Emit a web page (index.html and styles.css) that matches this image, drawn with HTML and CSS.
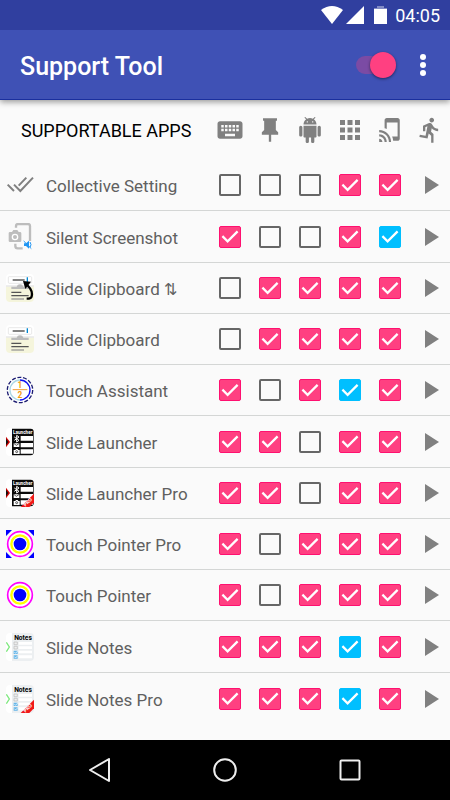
FILE: index.html
```html
<!DOCTYPE html>
<html lang="en">
<head>
  <meta charset="UTF-8">
  <meta name="viewport" content="width=device-width, initial-scale=1.0">
  <title>Support Tool</title>
  <link rel="stylesheet" href="styles.css">
</head>
<body>
  <!-- shared icons -->
  <svg class="defs" width="0" height="0" aria-hidden="true">
    <symbol id="play" viewBox="0 0 14 18"><path d="M0 0v18l14-9z"/></symbol>

    <symbol id="all" viewBox="0 0 84 84">
      <g fill="none" stroke="#808080" stroke-width="6">
        <path d="M5 41l19 19M24 41l19 19 38-40M38 44l23-24"/>
      </g>
    </symbol>

    <symbol id="silent" viewBox="0 0 84 84">
      <path d="M30 14V9q0-6 6-6h30q6 0 6 6v45" fill="none" stroke="#bdbdbd" stroke-width="7"/>
      <path d="M28 62v7q0 7 7 7h15" fill="none" stroke="#bdbdbd" stroke-width="7"/>
      <path d="M12 27h6l4-6h12l4 6h4q4 0 4 4v22q0 4-4 4H12q-4 0-4-4V31q0-4 4-4z" fill="#bdbdbd"/>
      <circle cx="27" cy="42" r="8" fill="none" stroke="#fff" stroke-width="4"/>
      <path d="M54 61h6l9-8v24l-9-8h-6z" fill="#2196f3"/>
      <path d="M53 54l23 23M72 57q6 8 0 16" fill="none" stroke="#2196f3" stroke-width="3"/>
    </symbol>

    <symbol id="clip" viewBox="0 0 84 84">
      <rect width="84" height="84" rx="12" fill="#fff"/>
      <path d="M0 38h84v34q0 12-12 12H12Q0 84 0 72z" fill="#f5f5dc"/>
      <rect x="7" y="8" width="70" height="20" rx="3" fill="#fff" stroke="#ddd" stroke-width="2"/>
      <path d="M20 18h36" stroke="#444" stroke-width="4"/>
      <path d="M64 10v14" stroke="#0288d1" stroke-width="4"/>
      <path d="M0 36h84" stroke="#ccc" stroke-width="2"/>
      <path d="M16 38v7h52v-7H52q-2-7-10-7t-10 7z" fill="#bbb"/>
      <path d="M16 55h30M16 65h52" stroke="#555" stroke-width="4"/>
      <path d="M16 75h38" stroke="#999" stroke-width="4"/>
    </symbol>

    <symbol id="clip-arrow" viewBox="0 0 84 84">
      <use href="#clip"/>
      <path d="M58 29q24 18 19 38-1 7-15 7" fill="none" stroke="#000" stroke-width="7"/>
      <path d="M51 21l24 2-17 22z"/>
    </symbol>

    <symbol id="assistant" viewBox="0 0 84 84">
      <circle cx="42" cy="42" r="38" fill="#fff" stroke="#1a1a70" stroke-width="4" stroke-dasharray="12 5"/>
      <path d="M42 12a30 30 0 0 0 0 60" fill="none" stroke="#add8e6" stroke-width="4"/>
      <path d="M42 12a30 30 0 0 1 0 60" fill="none" stroke="#1010f0" stroke-width="4"/>
      <path d="M20 41h44" stroke="#f39c35" stroke-width="3"/>
    </symbol>

    <symbol id="launcher" viewBox="0 0 84 84">
      <rect width="84" height="84" rx="12" fill="#fff"/>
      <path d="M0 26l12 16L0 58z" fill="#d00000"/>
      <path d="M0 32l7 10-7 10z" fill="#111"/>
      <path d="M18 2h56q9 0 9 9v62q0 9-9 9H18z" fill="#0a0a0a"/>
      <path d="M44 24h37v14H44zM44 45h37v13H44zM44 64h37v13H44z" fill="#fff"/>
      <path d="M25 27l14 10-7 5V22l7 5-14 10" fill="none" stroke="#fff" stroke-width="3"/>
      <path d="M23 46h17v11H23zM23 66h5l2-3h5l2 3h4v12H23z" fill="#fff"/>
      <path d="M23 46l8 6 9-6" fill="none" stroke="#111" stroke-width="2"/>
      <circle cx="32" cy="71" r="3" fill="none" stroke="#111" stroke-width="2"/>
    </symbol>

    <symbol id="notes" viewBox="0 0 84 84">
      <rect width="84" height="84" rx="12" fill="#fff"/>
      <path d="M18 0h54q12 0 12 12v60q0 12-12 12H18z" fill="#eceff1"/>
      <path d="M1 28l9 14-9 14" fill="none" stroke="#7de87d" stroke-width="4"/>
      <path d="M38 27h40v8H38zM38 40h40v8H38zM38 53h40v8H38zM38 67h40v9H38z" fill="#fff"/>
      <path d="M24 27h10v8H24zM24 40h10v8H24z" fill="#eee" stroke="#bbb" stroke-width="2"/>
      <path d="M23 53h12v10H23zM23 67h12v10H23z" fill="#64b5e8"/>
      <path d="M25 57l4 4 6-7M25 71l4 4 6-7" fill="none" stroke="#fff" stroke-width="2"/>
    </symbol>

    <symbol id="pro" viewBox="0 0 84 84">
      <path d="M84 44v26L70 84H44z" fill="#f01818"/>
    </symbol>

    <symbol id="pointer" viewBox="0 0 84 84">
      <circle cx="42" cy="42" r="37" fill="#fff" stroke="#f0f" stroke-width="5"/>
      <circle cx="42" cy="42" r="26" fill="#fff" stroke="#ff0" stroke-width="7"/>
      <circle cx="42" cy="42" r="19" fill="#00f"/>
    </symbol>
  </svg>

  <header>
    <div class="status">
      <svg width="22" height="18" viewBox="0 0 22 18" fill="#fff"><path d="M11 18L0 4q11-8 22 0z"/></svg>
      <svg width="18" height="18" viewBox="0 0 18 18" fill="#fff"><path d="M18 0v18H0z"/></svg>
      <svg class="battery" width="13" height="18" viewBox="0 0 13 18" fill="#fff"><path d="M3 0h7v2h3v2H0V2h3z" opacity=".4"/><path d="M0 3h13v15H0z"/></svg>
      <span class="clock">04:05</span>
    </div>
    <div class="appbar">
      <h1>Support Tool</h1>
      <input type="checkbox" class="switch" aria-label="Enable Support Tool" checked>
      <button type="button" class="more" aria-label="More options">
        <svg width="6" height="22" viewBox="0 0 6 22" fill="#fff"><circle cx="3" cy="3" r="3"/><circle cx="3" cy="11" r="3"/><circle cx="3" cy="19" r="3"/></svg>
      </button>
    </div>
  </header>

  <main>
    <table>
      <thead>
        <tr>
          <th class="title" scope="col">SUPPORTABLE APPS</th>
          <th scope="col" aria-label="Keyboard"><svg width="30" height="30" viewBox="0 0 24 24"><path d="M20 5H4c-1.100 0-1.990.9-1.990 2L2 17c0 1.100.9 2 2 2h16c1.100 0 2-.9 2-2V7c0-1.100-.9-2-2-2zm-9 3h2v2h-2V8zm0 3h2v2h-2v-2zM8 8h2v2H8V8zm0 3h2v2H8v-2zm-1 2H5v-2h2v2zm0-3H5V8h2v2zm9 7H8v-2h8v2zm0-4h-2v-2h2v2zm0-3h-2V8h2v2zm3 3h-2v-2h2v2zm0-3h-2V8h2v2z"/></svg></th>
          <th scope="col" aria-label="Pin"><svg width="28" height="28" viewBox="0 0 24 24"><path d="M6 2h12v2h-1v8l2 2v2h-6v6h-2v-6H5v-2l2-2V4H6z"/></svg></th>
          <th scope="col" aria-label="Android"><svg width="26" height="26" viewBox="0 0 24 24"><path d="M6 18c0 .55.45 1 1 1h1v3.500c0 .83.67 1.500 1.500 1.500s1.500-.67 1.500-1.500V19h2v3.500c0 .83.67 1.500 1.500 1.500s1.500-.67 1.500-1.500V19h1c.55 0 1-.45 1-1V8H6v10zM3.500 8C2.670 8 2 8.670 2 9.500v7c0 .83.67 1.500 1.500 1.500S5 17.330 5 16.500v-7C5 8.670 4.330 8 3.500 8zm17 0c-.83 0-1.500.67-1.500 1.500v7c0 .83.67 1.500 1.500 1.500s1.500-.67 1.500-1.500v-7c0-.83-.67-1.500-1.500-1.500zm-4.970-5.840l1.300-1.300c.2-.2.2-.51 0-.71-.2-.2-.51-.2-.71 0l-1.480 1.480C13.850 1.230 12.950 1 12 1c-.96 0-1.860.23-2.660.63L7.850.15c-.2-.2-.51-.2-.71 0-.2.2-.2.51 0 .71l1.310 1.310C6.970 3.260 6 5.010 6 7h12c0-1.990-.97-3.750-2.470-4.840zM10 5H9V4h1v1zm5 0h-1V4h1v1z"/></svg></th>
          <th scope="col" aria-label="Apps"><svg width="30" height="30" viewBox="0 0 24 24"><path d="M4 8h4V4H4v4zm6 12h4v-4h-4v4zm-6 0h4v-4H4v4zm0-6h4v-4H4v4zm6 0h4v-4h-4v4zm6-10v4h4V4h-4zm-6 4h4V4h-4v4zm6 6h4v-4h-4v4zm0 6h4v-4h-4v4z"/></svg></th>
          <th scope="col" aria-label="Tap and play"><svg width="26" height="26" viewBox="0 0 24 24"><path d="M2 16v2c2.760 0 5 2.240 5 5h2c0-3.870-3.130-7-7-7zm0 4v3h3c0-1.660-1.340-3-3-3zm0-8v2c4.970 0 9 4.030 9 9h2c0-6.080-4.920-11-11-11zM19 1.010L9 1c-1.100 0-2 .9-2 2v7.370c.69.160 1.360.37 2 .64V5h10v13h-5.030c.52 1.250.84 2.590.95 4H19c1.100 0 2-.9 2-2V3c0-1.100-.9-1.990-2-1.990z"/></svg></th>
          <th scope="col" aria-label="Run"><svg width="28" height="28" viewBox="0 0 24 24"><path d="M13.490 5.480c1.100 0 2-.9 2-2s-.9-2-2-2-2 .9-2 2 .9 2 2 2zm-3.600 13.900l1-4.400 2.100 2v6h2v-7.500l-2.100-2 .6-3c1.300 1.500 3.300 2.500 5.500 2.500v-2c-1.900 0-3.500-1-4.300-2.400l-1-1.600c-.4-.6-1-1-1.700-1-.3 0-.5.1-.8.1l-5.200 2.200v4.700h2v-3.400l1.800-.7-1.600 8.100-4.900-1-.4 2 7 1.400z"/></svg></th>
        </tr>
      </thead>
      <tbody>
        <tr>
          <th scope="row"><svg class="icon"><use href="#all"/></svg>Collective Setting</th>
          <td><input type="checkbox" aria-label="Collective Setting, keyboard"></td>
          <td><input type="checkbox" aria-label="Collective Setting, pin"></td>
          <td><input type="checkbox" aria-label="Collective Setting, android"></td>
          <td><input type="checkbox" aria-label="Collective Setting, apps" checked></td>
          <td><input type="checkbox" aria-label="Collective Setting, tap" checked></td>
          <td><button type="button" class="run" aria-label="Run Collective Setting"><svg><use href="#play"/></svg></button></td>
        </tr>
        <tr>
          <th scope="row"><svg class="icon"><use href="#silent"/></svg>Silent Screenshot</th>
          <td><input type="checkbox" aria-label="Silent Screenshot, keyboard" checked></td>
          <td><input type="checkbox" aria-label="Silent Screenshot, pin"></td>
          <td><input type="checkbox" aria-label="Silent Screenshot, android"></td>
          <td><input type="checkbox" aria-label="Silent Screenshot, apps" checked></td>
          <td><input type="checkbox" class="blue" aria-label="Silent Screenshot, tap" checked></td>
          <td><button type="button" class="run" aria-label="Run Silent Screenshot"><svg><use href="#play"/></svg></button></td>
        </tr>
        <tr>
          <th scope="row"><svg class="icon"><use href="#clip-arrow"/></svg>Slide Clipboard <span class="arrows">⇅</span></th>
          <td><input type="checkbox" aria-label="Slide Clipboard sync, keyboard"></td>
          <td><input type="checkbox" aria-label="Slide Clipboard sync, pin" checked></td>
          <td><input type="checkbox" aria-label="Slide Clipboard sync, android" checked></td>
          <td><input type="checkbox" aria-label="Slide Clipboard sync, apps" checked></td>
          <td><input type="checkbox" aria-label="Slide Clipboard sync, tap" checked></td>
          <td><button type="button" class="run" aria-label="Run Slide Clipboard sync"><svg><use href="#play"/></svg></button></td>
        </tr>
        <tr>
          <th scope="row"><svg class="icon"><use href="#clip"/></svg>Slide Clipboard</th>
          <td><input type="checkbox" aria-label="Slide Clipboard, keyboard"></td>
          <td><input type="checkbox" aria-label="Slide Clipboard, pin" checked></td>
          <td><input type="checkbox" aria-label="Slide Clipboard, android" checked></td>
          <td><input type="checkbox" aria-label="Slide Clipboard, apps" checked></td>
          <td><input type="checkbox" aria-label="Slide Clipboard, tap" checked></td>
          <td><button type="button" class="run" aria-label="Run Slide Clipboard"><svg><use href="#play"/></svg></button></td>
        </tr>
        <tr>
          <th scope="row"><svg class="icon" viewBox="0 0 84 84"><use href="#assistant"/><text class="digit" x="42" y="36">1</text><text class="digit" x="42" y="66">2</text></svg>Touch Assistant</th>
          <td><input type="checkbox" aria-label="Touch Assistant, keyboard" checked></td>
          <td><input type="checkbox" aria-label="Touch Assistant, pin"></td>
          <td><input type="checkbox" aria-label="Touch Assistant, android" checked></td>
          <td><input type="checkbox" class="blue" aria-label="Touch Assistant, apps" checked></td>
          <td><input type="checkbox" aria-label="Touch Assistant, tap" checked></td>
          <td><button type="button" class="run" aria-label="Run Touch Assistant"><svg><use href="#play"/></svg></button></td>
        </tr>
        <tr>
          <th scope="row"><svg class="icon" viewBox="0 0 84 84"><use href="#launcher"/><text class="cap-light" x="50" y="17">Launcher</text></svg>Slide Launcher</th>
          <td><input type="checkbox" aria-label="Slide Launcher, keyboard" checked></td>
          <td><input type="checkbox" aria-label="Slide Launcher, pin" checked></td>
          <td><input type="checkbox" aria-label="Slide Launcher, android"></td>
          <td><input type="checkbox" aria-label="Slide Launcher, apps" checked></td>
          <td><input type="checkbox" aria-label="Slide Launcher, tap" checked></td>
          <td><button type="button" class="run" aria-label="Run Slide Launcher"><svg><use href="#play"/></svg></button></td>
        </tr>
        <tr>
          <th scope="row"><svg class="icon" viewBox="0 0 84 84"><use href="#launcher"/><use href="#pro"/><text class="cap-light" x="50" y="17">Launcher</text><text class="ribbon" x="69" y="73" transform="rotate(-45 69 73)">PRO</text></svg>Slide Launcher Pro</th>
          <td><input type="checkbox" aria-label="Slide Launcher Pro, keyboard" checked></td>
          <td><input type="checkbox" aria-label="Slide Launcher Pro, pin" checked></td>
          <td><input type="checkbox" aria-label="Slide Launcher Pro, android"></td>
          <td><input type="checkbox" aria-label="Slide Launcher Pro, apps" checked></td>
          <td><input type="checkbox" aria-label="Slide Launcher Pro, tap" checked></td>
          <td><button type="button" class="run" aria-label="Run Slide Launcher Pro"><svg><use href="#play"/></svg></button></td>
        </tr>
        <tr>
          <th scope="row"><svg class="icon" viewBox="0 0 84 84"><path d="M0 0h18L0 18zM84 0v18L66 0zM0 84V66l18 18zM84 84H66l18-18z" fill="#00f"/><use href="#pointer"/></svg>Touch Pointer Pro</th>
          <td><input type="checkbox" aria-label="Touch Pointer Pro, keyboard" checked></td>
          <td><input type="checkbox" aria-label="Touch Pointer Pro, pin"></td>
          <td><input type="checkbox" aria-label="Touch Pointer Pro, android" checked></td>
          <td><input type="checkbox" aria-label="Touch Pointer Pro, apps" checked></td>
          <td><input type="checkbox" aria-label="Touch Pointer Pro, tap" checked></td>
          <td><button type="button" class="run" aria-label="Run Touch Pointer Pro"><svg><use href="#play"/></svg></button></td>
        </tr>
        <tr>
          <th scope="row"><svg class="icon"><use href="#pointer"/></svg>Touch Pointer</th>
          <td><input type="checkbox" aria-label="Touch Pointer, keyboard" checked></td>
          <td><input type="checkbox" aria-label="Touch Pointer, pin"></td>
          <td><input type="checkbox" aria-label="Touch Pointer, android" checked></td>
          <td><input type="checkbox" aria-label="Touch Pointer, apps" checked></td>
          <td><input type="checkbox" aria-label="Touch Pointer, tap" checked></td>
          <td><button type="button" class="run" aria-label="Run Touch Pointer"><svg><use href="#play"/></svg></button></td>
        </tr>
        <tr>
          <th scope="row"><svg class="icon" viewBox="0 0 84 84"><use href="#notes"/><text class="cap" x="51" y="20">Notes</text></svg>Slide Notes</th>
          <td><input type="checkbox" aria-label="Slide Notes, keyboard" checked></td>
          <td><input type="checkbox" aria-label="Slide Notes, pin" checked></td>
          <td><input type="checkbox" aria-label="Slide Notes, android" checked></td>
          <td><input type="checkbox" class="blue" aria-label="Slide Notes, apps" checked></td>
          <td><input type="checkbox" aria-label="Slide Notes, tap" checked></td>
          <td><button type="button" class="run" aria-label="Run Slide Notes"><svg><use href="#play"/></svg></button></td>
        </tr>
        <tr>
          <th scope="row"><svg class="icon" viewBox="0 0 84 84"><use href="#notes"/><use href="#pro"/><text class="cap" x="51" y="20">Notes</text><text class="ribbon" x="69" y="73" transform="rotate(-45 69 73)">PRO</text></svg>Slide Notes Pro</th>
          <td><input type="checkbox" aria-label="Slide Notes Pro, keyboard" checked></td>
          <td><input type="checkbox" aria-label="Slide Notes Pro, pin" checked></td>
          <td><input type="checkbox" aria-label="Slide Notes Pro, android" checked></td>
          <td><input type="checkbox" class="blue" aria-label="Slide Notes Pro, apps" checked></td>
          <td><input type="checkbox" aria-label="Slide Notes Pro, tap" checked></td>
          <td><button type="button" class="run" aria-label="Run Slide Notes Pro"><svg><use href="#play"/></svg></button></td>
        </tr>
      </tbody>
    </table>
  </main>

  <nav>
    <button type="button" aria-label="Back"><svg width="24" height="24" viewBox="0 0 24 24"><path d="M21 1v22L2 12z"/></svg></button>
    <button type="button" aria-label="Home"><svg width="24" height="24" viewBox="0 0 24 24"><circle cx="12" cy="12" r="10.800"/></svg></button>
    <button type="button" aria-label="Recent apps"><svg width="24" height="24" viewBox="0 0 24 24"><rect x="2.500" y="2.500" width="19" height="19" rx="1"/></svg></button>
  </nav>
</body>
</html>
```

FILE: styles.css
```css
* {
  margin: 0;
  padding: 0;
  box-sizing: border-box;
}
body {
  min-height: 100vh;
  display: flex;
  flex-direction: column;
  background-color: #fafafa;
  font-family: Roboto, "Liberation Sans", sans-serif;
}
svg {
  display: block;
}
.defs {
  position: absolute;
}
button {
  border: none;
  background: none;
  display: flex;
  align-items: center;
  justify-content: center;
}

/* top bars */
header {
  color: #fff;
  box-shadow: 0 2px 6px rgba(0, 0, 0, 0.4);
}
.status {
  height: 30px;
  padding-right: 10px;
  display: flex;
  align-items: center;
  justify-content: flex-end;
  gap: 3px;
  background-color: #303f9f;
}
.battery {
  margin: 0 5px 0 7px;
}
.clock {
  font-size: 18px;
  font-weight: 400;
}
.appbar {
  height: 70px;
  padding: 0 12px 0 20px;
  display: flex;
  align-items: center;
  background-color: #3f51b5;
  border-bottom: 1px solid #1a2f9e;
}
h1 {
  flex: 1;
  padding-top: 3px;
  font-size: 25px;
  font-weight: 500;
}
.switch {
  appearance: none;
  width: 40px;
  height: 18px;
  display: flex;
  align-items: center;
  justify-content: flex-end;
  border-radius: 9px;
  background-color: #7b4ba4;
}
.switch::after {
  content: "";
  width: 26px;
  height: 26px;
  flex: none;
  border-radius: 50%;
  background-color: #ff4081;
  box-shadow: 0 1px 3px rgba(0, 0, 0, 0.5);
}
.more {
  width: 30px;
  height: 40px;
  margin-left: 12px;
}

/* app list */
main {
  flex: 1;
}
table {
  width: 100%;
  table-layout: fixed;
  border-collapse: separate;
  border-spacing: 0;
}
thead th {
  width: 40px;
  height: 60px;
}
thead svg {
  margin: 0 auto;
  fill: #808080;
}
thead .title {
  width: auto;
  padding-left: 21px;
  text-align: left;
  font-size: 18px;
  font-weight: 450;
  white-space: nowrap;
}
tbody tr {
  height: 51px;
}
tbody tr:nth-child(4n+2) {
  height: 52px;
}
tbody th,
tbody td {
  border-bottom: 1px solid #d4d6d5;
  vertical-align: middle;
}
tbody tr:last-child > * {
  border-bottom: none;
}
tbody th {
  padding-left: 6px;
  text-align: left;
  font-size: 17px;
  font-weight: 400;
  color: #606060;
  white-space: nowrap;
}
.icon {
  display: inline-block;
  width: 28px;
  height: 28px;
  margin-right: 12px;
  vertical-align: -7px;
}
.arrows {
  font-size: 16px;
  line-height: 16px;
}
td input {
  appearance: none;
  display: block;
  width: 22px;
  height: 22px;
  margin: 0 auto;
  border: 2px solid #666;
  border-radius: 2px;
}
td input:checked {
  border: 1px solid #ff1070;
  background-color: #ff4081;
}
td input.blue:checked {
  border-color: #00bfff;
  background-color: #00bfff;
}
td input:checked::after {
  content: "";
  display: block;
  width: 20px;
  height: 20px;
  background-color: #fff;
  clip-path: polygon(8% 53%, 16% 44%, 38% 66%, 84% 20%, 92% 29%, 38% 83%);
}
.run {
  width: 40px;
  height: 30px;
  padding-left: 4px;
}
.run svg {
  width: 14px;
  height: 18px;
  fill: #808080;
}

/* lettering inside the app icons */
.icon text {
  font-weight: 700;
  text-anchor: middle;
}
.digit {
  font-size: 25px;
  fill: #f39c12;
}
.cap {
  font-size: 20px;
}
.cap-light {
  font-size: 14px;
  fill: #fff;
}
.ribbon {
  font-size: 15px;
  fill: #fff;
}

/* system keys */
nav {
  height: 60px;
  padding: 0 37px;
  display: flex;
  background-color: #000;
}
nav button {
  flex: 1;
}
nav svg {
  fill: none;
  stroke: #eee;
  stroke-width: 2;
  stroke-linejoin: round;
}
```
